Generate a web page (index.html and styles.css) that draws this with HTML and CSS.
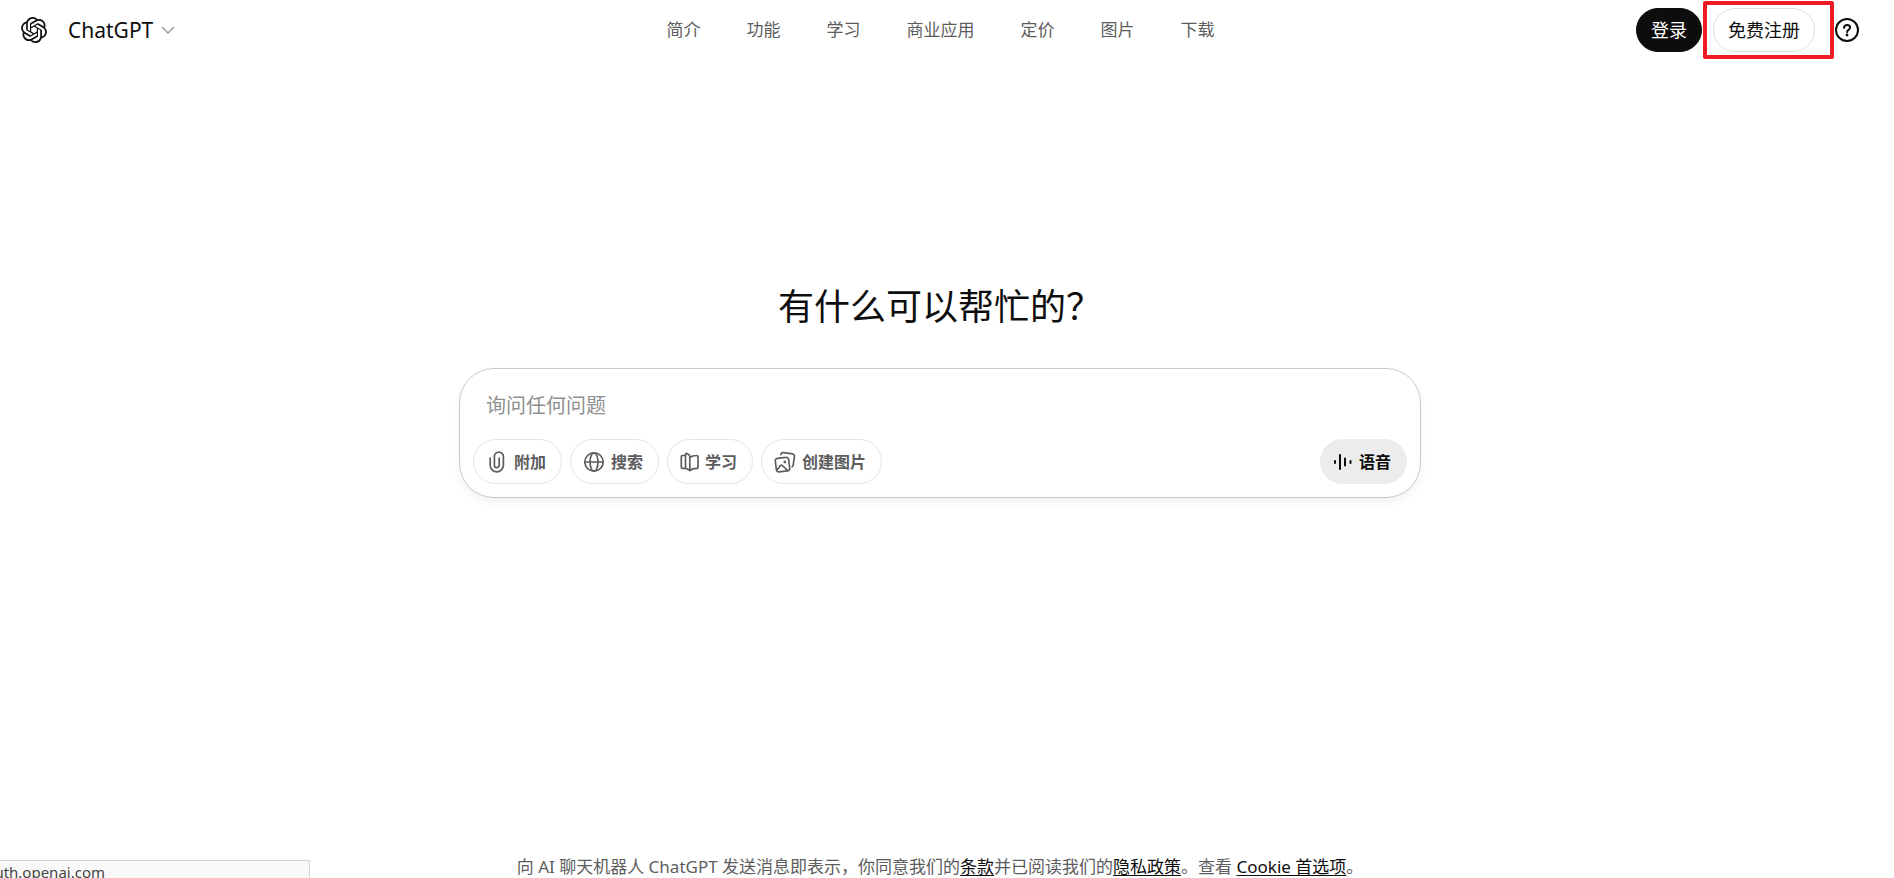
FILE: index.html
```html
<!DOCTYPE html>
<html lang="zh-CN">
<head>
    <meta charset="UTF-8">
    <meta name="viewport" content="width=device-width, initial-scale=1.0">
    <title>ChatGPT</title>
    <link rel="stylesheet" href="styles.css">
</head>
<body>
    <header class="header">
        <div class="brand">
            <a class="logo" href="#" aria-label="ChatGPT 首页">
                <svg width="26" height="26" viewBox="0 0 24 24" fill="currentColor"><path d="M22.2819 9.8211a5.9847 5.9847 0 0 0-.5157-4.9108 6.0462 6.0462 0 0 0-6.5098-2.9A6.0651 6.0651 0 0 0 4.9807 4.1818a5.9847 5.9847 0 0 0-3.9977 2.9 6.0462 6.0462 0 0 0 .7427 7.0966 5.98 5.98 0 0 0 .511 4.9107 6.051 6.051 0 0 0 6.5146 2.9001A5.9847 5.9847 0 0 0 13.2599 24a6.0557 6.0557 0 0 0 5.7718-4.2058 5.9894 5.9894 0 0 0 3.9977-2.9001 6.0557 6.0557 0 0 0-.7475-7.0729zm-9.022 12.6081a4.4755 4.4755 0 0 1-2.8764-1.0408l.1419-.0804 4.7783-2.7582a.7948.7948 0 0 0 .3927-.6813v-6.7369l2.02 1.1686a.071.071 0 0 1 .038.052v5.5826a4.504 4.504 0 0 1-4.4945 4.4944zm-9.6607-4.1254a4.4708 4.4708 0 0 1-.5346-3.0137l.142.0852 4.783 2.7582a.7712.7712 0 0 0 .7806 0l5.8428-3.3685v2.3324a.0804.0804 0 0 1-.0332.0615L9.74 19.9502a4.4992 4.4992 0 0 1-6.1408-1.6464zM2.3408 7.8956a4.485 4.485 0 0 1 2.3655-1.9728V11.6a.7664.7664 0 0 0 .3879.6765l5.8144 3.3543-2.0201 1.1685a.0757.0757 0 0 1-.071 0l-4.8303-2.7865A4.504 4.504 0 0 1 2.3408 7.872zm16.5963 3.8558L13.1038 8.364 15.1192 7.2a.0757.0757 0 0 1 .071 0l4.8303 2.7913a4.4944 4.4944 0 0 1-.6765 8.1042v-5.6772a.79.79 0 0 0-.407-.667zm2.0107-3.0231l-.142-.0852-4.7735-2.7818a.7759.7759 0 0 0-.7854 0L9.409 9.2297V6.8974a.0662.0662 0 0 1 .0284-.0615l4.8303-2.7866a4.4992 4.4992 0 0 1 6.6802 4.66zM8.3065 12.863l-2.02-1.1638a.0804.0804 0 0 1-.038-.0567V6.0742a4.4992 4.4992 0 0 1 7.3757-3.4537l-.142.0805L8.704 5.459a.7948.7948 0 0 0-.3927.6813zm1.0976-2.3654l2.602-1.4998 2.6069 1.4998v2.9994l-2.5974 1.4997-2.6067-1.4997Z"/></svg>
            </a>
            <button class="model" type="button">
                ChatGPT
                <svg width="14" height="8" viewBox="0 0 14 8" fill="none" stroke="#999" stroke-width="1.5"><path d="M1 1l6 6 6-6"/></svg>
            </button>
        </div>

        <nav class="nav">
            <a href="#">简介</a>
            <a href="#">功能</a>
            <a href="#">学习</a>
            <a href="#">商业应用</a>
            <a href="#">定价</a>
            <a href="#">图片</a>
            <a href="#">下载</a>
        </nav>

        <div class="account">
            <button class="pill login" type="button">登录</button>
            <div class="marked">
                <button class="pill signup" type="button">免费注册</button>
            </div>
            <button class="help" type="button" aria-label="帮助">
                <svg width="26" height="26" viewBox="0 0 26 26" fill="none" stroke="currentColor" stroke-width="2"><circle cx="13" cy="13" r="11"/><path d="M10 10.800c.2-1.700 1.400-2.700 3.100-2.700 1.800 0 3 1 3 2.500 0 2.200-3 2.300-3 4.400" stroke-linecap="round"/><circle cx="13" cy="18" r="1.400" fill="currentColor" stroke="none"/></svg>
            </button>
        </div>
    </header>

    <main class="main">
        <h1 class="title">有什么可以帮忙的？</h1>
        <form class="composer">
            <input class="prompt" type="text" placeholder="询问任何问题" aria-label="询问任何问题">
            <div class="tools">
                <button class="chip" type="button">
                    <svg class="clip" width="16" height="22" viewBox="0 0 16 22"><path d="M1.200 7v7.300a6.600 6.600 0 0 0 13.200 0V5.600a4.500 4.500 0 0 0-9 0v8.600a2.400 2.400 0 0 0 4.800 0V7"/></svg>
                    附加
                </button>
                <button class="chip" type="button">
                    <svg width="22" height="22" viewBox="0 0 22 22"><circle cx="11" cy="11" r="9.200"/><ellipse cx="11" cy="11" rx="4" ry="9.200"/><path d="M1.800 11h18.400"/></svg>
                    搜索
                </button>
                <button class="chip" type="button">
                    <svg width="19" height="22" viewBox="0 0 19 22"><path d="M5.500 4.500H2.500A1.200 1.200 0 0 0 1.300 5.700v10.500a1.200 1.200 0 0 0 1.200 1.200h3M9.800 6.500v13M9.800 19.500l-3.500-2a1.500 1.500 0 0 1-.8-1.300V3.600c0-1 .9-1.400 1.700-.9l1.700 1.100c.6.4.9 1 .9 1.700M9.800 6.500c1.700-1.500 4.200-2 7-2A1.200 1.200 0 0 1 18 5.700v10.500a1.200 1.200 0 0 1-1.200 1.200c-3 0-5.200.5-7 2.100"/></svg>
                    学习
                </button>
                <button class="chip" type="button">
                    <svg width="22" height="22" viewBox="0 0 22 22"><path d="M3.300 7.400l8.700-1a2.300 2.300 0 0 1 2.600 2l1.100 8.900a2.300 2.300 0 0 1-2 2.600l-8.700 1a2.300 2.300 0 0 1-2.600-2L1.300 10a2.300 2.300 0 0 1 2-2.600zM3 19l3.300-4.200a1.500 1.500 0 0 1 2.100-.2l5.400 5M6.800 3.600l.1-.3a2.300 2.300 0 0 1 2.600-1.700l8.900 1.300a2.300 2.300 0 0 1 2 2.600l-1.200 8.600a2.300 2.300 0 0 1-1 1.600"/><circle class="dot" cx="10.800" cy="11" r="1.400"/></svg>
                    创建图片
                </button>
                <button class="chip voice" type="button">
                    <svg width="20" height="22" viewBox="0 0 20 22"><path d="M2 10v2M7 4v14M12 7.500v7M17.500 10v2"/></svg>
                    语音
                </button>
            </div>
        </form>
    </main>

    <footer class="footer">向 AI 聊天机器人 ChatGPT 发送消息即表示，你同意我们的<a href="#">条款</a>并已阅读我们的<a href="#">隐私政策</a>。查看 <a href="#">Cookie 首选项</a>。</footer>

    <div class="status"><span>auth.openai.com</span></div>
</body>
</html>
```
FILE: styles.css
```css
* {
    margin: 0;
    padding: 0;
    box-sizing: border-box;
}

body {
    display: flex;
    flex-direction: column;
    height: 100vh;
    padding-right: 14px;
    overflow: hidden;
    background: #fff;
    color: #0d0d0d;
    font-family: "Noto Sans", "Noto Sans CJK SC", sans-serif;
    font-size: 17px;
    line-height: 22px;
}

button {
    border: none;
    background: none;
    color: inherit;
    font: inherit;
    white-space: nowrap;
    cursor: pointer;
}

a {
    color: inherit;
}

svg {
    display: block;
    flex: none;
}

/* 顶部栏 */
.header {
    display: grid;
    grid-template-columns: 1fr auto 1fr;
    align-items: center;
    padding: 1px 20px 0 21px;
}

.brand {
    display: flex;
    align-items: center;
    gap: 21px;
}

.model {
    display: flex;
    align-items: center;
    gap: 8px;
    font-size: 21px;
}

.nav {
    display: flex;
    gap: 46px;
    color: #5d5d5d;
}

.nav a {
    text-decoration: none;
}

.account {
    display: flex;
    align-items: center;
    justify-content: flex-end;
}

.pill {
    height: 44px;
    padding: 0 14px;
    border: 1px solid #0d0d0d;
    border-radius: 22px;
    font-size: 18px;
}

.login {
    background: #0d0d0d;
    color: #fff;
}

.signup {
    border-color: #dedede;
}

/* 红框标注注册按钮 */
.marked {
    display: flex;
    align-items: center;
    height: 58px;
    margin-left: 1px;
    padding: 0 15px 0 6px;
    border: 4px solid #ed1c24;
    border-radius: 2px;
}

/* 中间输入区 */
.main {
    display: flex;
    flex: 1;
    flex-direction: column;
    align-items: center;
    justify-content: center;
    padding-bottom: 131px;
}

.title {
    margin-bottom: 40px;
    font-size: 36px;
    font-weight: 400;
    line-height: 42px;
}

.composer {
    width: 100%;
    max-width: 962px;
    padding: 13px;
    border: 1px solid #c8c8c8;
    border-radius: 35px;
    box-shadow: 0 4px 8px rgba(0, 0, 0, 0.05);
}

.prompt {
    display: block;
    width: 100%;
    height: 46px;
    margin-bottom: 11px;
    padding: 0 13px;
    border: none;
    outline: none;
    background: none;
    font: inherit;
    font-size: 20px;
}

.prompt::placeholder {
    color: #8f8f8f;
    opacity: 1;
}

.tools {
    display: flex;
    gap: 8px;
}

.chip {
    display: flex;
    align-items: center;
    gap: 6px;
    height: 45px;
    padding: 0 15px 0 12px;
    border: 1px solid #e5e5e5;
    border-radius: 23px;
    color: #5d5d5d;
    font-size: 16px;
    font-weight: 600;
}

.chip svg {
    fill: none;
    stroke: currentColor;
    stroke-width: 1.7;
    stroke-linecap: round;
    stroke-linejoin: round;
}

.chip .clip {
    margin: 0 3px;
}

.chip .dot {
    fill: currentColor;
    stroke: none;
}

.voice {
    margin-left: auto;
    border-color: #ececec;
    background: #ececec;
    color: #0d0d0d;
}

.voice svg {
    stroke-width: 2;
}

/* 底部条款 */
.footer {
    color: #5d5d5d;
    text-align: center;
}

.footer a {
    color: #0d0d0d;
    text-underline-offset: 2px;
}

/* 浏览器链接状态条 */
.status {
    position: absolute;
    bottom: 0;
    left: 0;
    width: 310px;
    height: 18px;
    overflow: hidden;
    border: 1px solid #d5d5d5;
    border-width: 1px 1px 0 0;
    background: #f9f9f9;
    color: #444;
}

.status span {
    display: flex;
    justify-content: flex-end;
    width: 105px;
    font-size: 15px;
}
```
